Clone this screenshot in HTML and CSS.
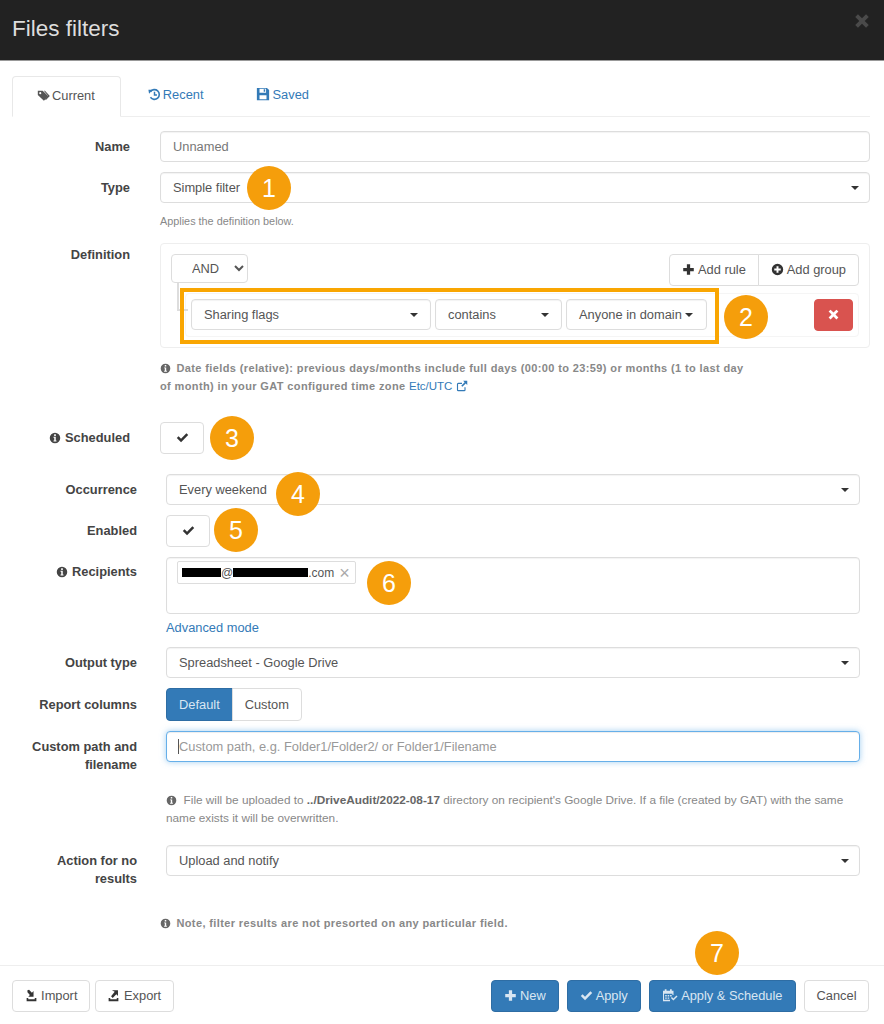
FILE: index.html
```html
<!DOCTYPE html>
<html lang="en">
<head>
    <meta charset="UTF-8">
    <meta name="viewport" content="width=device-width, initial-scale=1.0">
    <title>Files filters</title>
    <link rel="stylesheet" href="styles.css">
</head>
<body>
    <svg class="sprite" aria-hidden="true">
        <symbol id="i-info" viewBox="0 0 16 16"><path fill-rule="evenodd" d="M8 1a7 7 0 1 1 0 14A7 7 0 0 1 8 1zM6.900 3v2.200h2.200V3zM6 6.400v1.300h1v3.600H6v1.400h4v-1.400H9V6.400z"/></symbol>
        <symbol id="i-check" viewBox="0 0 16 16"><path d="M1 8.600 3.200 6.400l3 3 6.600-6.600L15 5l-8.800 8.800z"/></symbol>
        <symbol id="i-plus" viewBox="0 0 16 16"><path d="M6 1.500h4V6h4.500v4H10v4.500H6V10H1.500V6H6z"/></symbol>
        <symbol id="i-plus-circle" viewBox="0 0 16 16"><path fill-rule="evenodd" d="M8 1a7 7 0 1 1 0 14A7 7 0 0 1 8 1zM6.800 4v2.800H4v2.400h2.800V12h2.400V9.200H12V6.800H9.200V4z"/></symbol>
        <symbol id="i-times" viewBox="0 0 16 16"><path d="M4.400 2 8 5.600 11.600 2 14 4.400 10.400 8l3.600 3.600-2.400 2.400L8 10.400 4.400 14 2 11.600 5.600 8 2 4.400z"/></symbol>
        <symbol id="i-tag" viewBox="0 0 16 16"><path fill-rule="evenodd" d="M1 2h6l7 7-5.500 5.500L1 7.500zM4 3.800a1.300 1.300 0 1 0 0 2.600 1.300 1.300 0 0 0 0-2.600z"/><path d="M8.500 2h1.300l6 6.500-4.800 5-1-1 3.700-4z"/></symbol>
        <symbol id="i-history" viewBox="0 0 16 16"><path fill="none" stroke="currentColor" stroke-width="2" d="M3 4.500A6 6 0 1 1 3 11.500"/><path d="M0.500 2 5.800 2.300 1.300 7z"/><path fill="none" stroke="currentColor" stroke-width="1.800" d="M8 4.500V8.500h3"/></symbol>
        <symbol id="i-save" viewBox="0 0 16 16"><path fill-rule="evenodd" d="M1 1h11.500L15 3.500V15H1zM4 2v4.500h7.500V2zM4 9.500V14h8V9.500zM8.800 2.500h1.700v3H8.800z"/></symbol>
        <symbol id="i-link" viewBox="0 0 16 16"><path fill="none" stroke="currentColor" stroke-width="1.500" d="M12 9.500v3.700a1 1 0 0 1-1 1H3a1 1 0 0 1-1-1V5.500a1 1 0 0 1 1-1h5"/><path d="M9.500 1H15v5.500l-2-2-4.500 4.500-1.500-1.500L11.500 3z"/></symbol>
        <symbol id="i-calendar" viewBox="0 0 18 16"><path fill-rule="evenodd" d="M1 3h2V1.500h2V3h4V1.500h2V3h2v5h-1.200V6.500H2.200v7H9V15H1zM3.500 8h1.800v1.600H3.500zM6.300 8h1.800v1.600H6.300zM9.100 8h1.800v1.600H9.100zM3.500 10.800h1.800v1.600H3.500zM6.300 10.800h1.800v1.600H6.300z"/><path d="m10 11.500 1.200-1.200 1.700 1.700 3.500-3.500 1.200 1.200-4.700 4.700z"/></symbol>
        <symbol id="i-import" viewBox="0 0 16 16"><path d="M2 11h2v1.500h8V11h2v4H2z"/><path d="M3 1.500 5 1l3.500 3.500L10.500 2.500V9.500H4l2-2L3 4z"/></symbol>
        <symbol id="i-export" viewBox="0 0 16 16"><path d="M2 11h2v1.500h8V11h2v4H2z"/><path d="M6 1.500h7.500V8.500l-2-2L7 11 5 9l4.500-5.500z"/></symbol>
    </svg>

    <div class="modal">
        <header class="modal-header">
            <h1>Files filters</h1>
            <svg class="close-icon"><use href="#i-times"/></svg>
        </header>

        <main class="modal-body">
            <ul class="tabs">
                <li class="tab active"><svg class="icon"><use href="#i-tag"/></svg>Current</li>
                <li class="tab"><svg class="icon"><use href="#i-history"/></svg>Recent</li>
                <li class="tab tab-saved"><svg class="icon"><use href="#i-save"/></svg>Saved</li>
            </ul>

            <div class="form-row">
                <label class="row-label">Name</label>
                <input class="control name-input" type="text" value="Unnamed">
            </div>
            <div class="form-row">
                <label class="row-label">Type</label>
                <div class="control select">Simple filter<span class="caret"></span></div>
            </div>
            <p class="help applies">Applies the definition below.</p>

            <div class="form-row definition-row">
                <label class="row-label">Definition</label>
                <div class="definition">
                    <div class="group-head">
                        <select class="and-select"><option>AND</option></select>
                        <div class="btn-group">
                            <button class="btn"><svg class="icon dark"><use href="#i-plus"/></svg> Add rule</button>
                            <button class="btn"><svg class="icon dark"><use href="#i-plus-circle"/></svg> Add group</button>
                        </div>
                    </div>
                    <div class="rule">
                        <div class="control select rule-field">Sharing flags<span class="caret"></span></div>
                        <div class="control select rule-op">contains<span class="caret"></span></div>
                        <div class="control select rule-value">Anyone in domain<span class="caret"></span></div>
                        <button class="btn btn-danger"><svg class="icon"><use href="#i-times"/></svg></button>
                    </div>
                </div>
            </div>
            <p class="note date-note"><svg class="icon"><use href="#i-info"/></svg> Date fields (relative): previous days/months include full days (00:00 to 23:59) or months (1 to last day<br>of month) in your GAT configured time zone <a href="#">Etc/UTC <svg class="icon"><use href="#i-link"/></svg></a></p>

            <div class="form-row scheduled-row">
                <label class="row-label"><svg class="icon"><use href="#i-info"/></svg> Scheduled</label>
                <button class="btn check-btn"><svg class="icon dark"><use href="#i-check"/></svg></button>
            </div>

            <section class="schedule">
                <div class="form-row">
                    <label class="row-label">Occurrence</label>
                    <div class="control select">Every weekend<span class="caret"></span></div>
                </div>
                <div class="form-row">
                    <label class="row-label">Enabled</label>
                    <button class="btn check-btn"><svg class="icon dark"><use href="#i-check"/></svg></button>
                </div>
                <div class="form-row">
                    <label class="row-label recipients-label"><svg class="icon"><use href="#i-info"/></svg> Recipients</label>
                    <div class="control recipients">
                        <span class="chip"><span class="redact first"></span>@<span class="redact second"></span>.com<span class="chip-x">×</span></span>
                    </div>
                </div>
                <div class="form-row advanced">
                    <span class="row-label"></span>
                    <a href="#">Advanced mode</a>
                </div>
                <div class="form-row">
                    <label class="row-label">Output type</label>
                    <div class="control select">Spreadsheet - Google Drive<span class="caret"></span></div>
                </div>
                <div class="form-row">
                    <label class="row-label columns-label">Report columns</label>
                    <div class="btn-group columns">
                        <button class="btn btn-primary">Default</button>
                        <button class="btn">Custom</button>
                    </div>
                </div>
                <div class="form-row">
                    <label class="row-label two-line">Custom path and filename</label>
                    <div class="focus-wrap">
                        <input class="control focused" type="text" placeholder="Custom path, e.g. Folder1/Folder2/ or Folder1/Filename">
                    </div>
                </div>
                <div class="form-row upload-help">
                    <span class="row-label"></span>
                    <p class="help"><svg class="icon"><use href="#i-info"/></svg> &nbsp;File will be uploaded to <b>../DriveAudit/2022-08-17</b> directory on recipient's Google Drive. If a file (created by GAT) with the same<br>name exists it will be overwritten.</p>
                </div>
                <div class="form-row no-results">
                    <label class="row-label two-line">Action for no results</label>
                    <div class="control select">Upload and notify<span class="caret"></span></div>
                </div>
            </section>

            <p class="note presort-note"><svg class="icon"><use href="#i-info"/></svg> Note, filter results are not presorted on any particular field.</p>
        </main>

        <footer class="modal-footer">
            <div class="footer-left">
                <button class="btn"><svg class="icon dark"><use href="#i-import"/></svg> Import</button>
                <button class="btn"><svg class="icon dark"><use href="#i-export"/></svg> Export</button>
            </div>
            <div class="footer-right">
                <button class="btn btn-primary"><svg class="icon"><use href="#i-plus"/></svg> New</button>
                <button class="btn btn-primary"><svg class="icon"><use href="#i-check"/></svg> Apply</button>
                <button class="btn btn-primary schedule-btn"><svg class="icon wide"><use href="#i-calendar"/></svg> Apply &amp; Schedule</button>
                <button class="btn cancel-btn">Cancel</button>
            </div>
        </footer>

        <!-- annotations drawn over the dialog -->
        <div class="highlight"></div>
        <span class="badge b1">1</span>
        <span class="badge b2">2</span>
        <span class="badge b3">3</span>
        <span class="badge b4">4</span>
        <span class="badge b5">5</span>
        <span class="badge b6">6</span>
        <span class="badge b7">7</span>
    </div>
</body>
</html>
```

FILE: styles.css
```css
* {
    margin: 0;
    padding: 0;
    box-sizing: border-box;
}

html, body {
    height: 100%;
    overflow: hidden;
}

body {
    font-family: "Liberation Sans", Arial, sans-serif;
    font-size: 12.85px;
    line-height: 18px;
    color: #555;
    background: #fff;
}

a {
    color: #337ab7;
    text-decoration: none;
}

.sprite {
    display: none;
}

.icon {
    width: 13px;
    height: 13px;
    fill: currentColor;
    vertical-align: -2px;
}

.icon.dark {
    color: #333;
}

.icon.wide {
    width: 16px;
    height: 14px;
}

.modal {
    position: relative;
    height: 1024px;
    display: flex;
    flex-direction: column;
}

.modal-header {
    height: 61px;
    flex: none;
    background: #222;
    border-bottom: 1px solid #999;
    padding: 0 12px;
    display: flex;
    justify-content: space-between;
}

.modal-header h1 {
    font-size: 22.500px;
    font-weight: normal;
    line-height: 58px;
    color: #ddd;
}

.close-icon {
    width: 18px;
    height: 18px;
    fill: #4a4a4a;
    margin: 12px 1px 0 0;
}

.modal-body {
    flex: 1;
    padding: 15px 14px 0 12px;
}

/* tabs */
.tabs {
    display: flex;
    list-style: none;
    height: 41px;
    border-bottom: 1px solid #eee;
    margin-bottom: 14px;
}

.tab {
    padding: 10px 25px;
    margin-right: 2px;
    height: 41px;
    color: #337ab7;
}

.tab .icon {
    margin-right: 2px;
}

.tab-saved .icon {
    width: 14px;
    height: 14px;
    margin-right: 3px;
}

.tab.active {
    color: #555;
    background: #fff;
    border: 1px solid #e8e8e8;
    border-bottom-color: #fff;
    border-radius: 4px 4px 0 0;
    padding: 10px 25px 10px 24px;
}

/* form rows */
.form-row {
    display: flex;
    align-items: flex-start;
    margin-bottom: 10px;
}

.row-label {
    width: 118px;
    flex: none;
    margin-right: 30px;
    padding-top: 7px;
    text-align: right;
    font-weight: bold;
    color: #444;
}

.row-label .icon {
    width: 12px;
    height: 12px;
}

.control {
    flex: 1;
    min-width: 0;
    width: 100%;
    height: 31px;
    padding: 5px 12px;
    font: inherit;
    color: #555;
    background: #fff;
    border: 1px solid #ddd;
    border-radius: 4px;
    box-shadow: inset 0 1px 1px rgba(0, 0, 0, 0.05);
}

.name-input {
    color: #777;
}

.select {
    position: relative;
    line-height: 19px;
}

.caret {
    position: absolute;
    right: 10px;
    top: 13px;
    border-top: 4px solid #333;
    border-left: 4px solid transparent;
    border-right: 4px solid transparent;
}

.help {
    font-size: 11.800px;
    line-height: 18px;
    color: #888;
}

.help .icon {
    width: 11px;
    height: 11px;
    color: #666;
}

.help b {
    color: #666;
}

.applies {
    font-size: 10.850px;
    margin: -1px 0 13px 148px;
}

/* definition box */
.definition {
    flex: 1;
    min-width: 0;
    height: 105px;
    padding: 10px;
    border: 1px solid #eee;
    border-radius: 4px;
}

.definition-row {
    margin-bottom: 0;
}

.definition-row .row-label {
    padding-top: 3px;
}

.group-head {
    display: flex;
    justify-content: space-between;
    align-items: flex-start;
}

.and-select {
    width: 77px;
    height: 29px;
    padding-left: 16px;
    font: inherit;
    color: #555;
    background: #fff;
    border: 1px solid #ddd;
    border-radius: 4px;
}

.btn {
    height: 32px;
    padding: 0 12px;
    font: inherit;
    color: #555;
    background: #fff;
    border: 1px solid #ddd;
    border-radius: 4px;
}

.btn-primary {
    color: #d9e6f2;
    background: #337ab7;
    border-color: #2e6da4;
}

.btn-danger {
    width: 39px;
    padding: 0;
    margin-left: auto;
    color: #fff;
    background: #d9534f;
    border-color: #d9534f;
}

.btn-group {
    display: flex;
}

.btn-group .btn:first-child {
    border-radius: 4px 0 0 4px;
}

.btn-group .btn:last-child {
    margin-left: -1px;
    border-radius: 0 4px 4px 0;
}

.rule {
    position: relative;
    display: flex;
    gap: 4px;
    height: 44px;
    margin: 7px 0 0 14px;
    padding: 5px;
    border: 1px solid #f5f5f5;
    border-radius: 4px;
}

.rule::before {
    content: "";
    position: absolute;
    left: -9px;
    top: -11px;
    width: 9px;
    height: 26px;
    border-left: 2px solid #ddd;
    border-bottom: 2px solid #ddd;
}

.rule-field {
    flex: none;
    width: 240px;
}

.rule-field .caret,
.rule-op .caret {
    right: 12px;
}

.rule-op {
    flex: none;
    width: 127px;
}

.rule-value {
    flex: none;
    width: 141px;
}

.rule-value .caret {
    right: 13px;
}

.note {
    font-size: 11px;
    font-weight: bold;
    line-height: 18px;
    letter-spacing: 0.38px;
    color: #888;
}

.note a {
    font-size: 11.500px;
    font-weight: normal;
    letter-spacing: 0;
}

.note .icon {
    width: 11px;
    height: 11px;
    color: #666;
    margin-right: 2px;
}

.note a .icon {
    width: 12px;
    height: 12px;
    color: #337ab7;
    margin: 0;
}

.date-note {
    margin: 11px 0 27px 148px;
}

.scheduled-row {
    margin-bottom: 20px;
}

.check-btn {
    width: 44px;
    flex: none;
}

.schedule {
    padding-right: 10px;
}

.schedule .row-label {
    width: 125px;
    margin-right: 29px;
}

.schedule .recipients-label {
    padding-top: 6px;
}

.schedule .columns-label {
    padding-top: 8px;
}

.recipients {
    height: 57px;
    padding: 3px 10px;
}

.chip {
    display: inline-flex;
    align-items: center;
    height: 23px;
    padding: 0 5px 0 4px;
    font-size: 12px;
    border: 1px solid #ddd;
    border-radius: 2px;
}

.redact {
    display: inline-block;
    height: 9px;
    background: #000;
}

.redact.first {
    width: 39px;
}

.redact.second {
    width: 75px;
}

.chip-x {
    margin-left: 5px;
    font-size: 18px;
    color: #aaa;
}

.advanced {
    margin-top: -5px;
    margin-bottom: 10px;
}

.schedule .advanced .row-label {
    padding: 0;
}

.columns .btn {
    height: 33px;
}

.focus-wrap {
    position: relative;
    flex: 1;
}

.focus-wrap::before {
    content: "";
    position: absolute;
    left: 12px;
    top: 8px;
    width: 1px;
    height: 15px;
    background: #555;
}

.focused {
    display: block;
    border-color: #66afe9;
    box-shadow: inset 0 1px 1px rgba(0, 0, 0, 0.075), 0 0 6px rgba(102, 175, 233, 0.6);
}

.focused::placeholder {
    color: #999;
}

.upload-help {
    margin-top: 17px;
    margin-bottom: 18px;
}

.schedule .upload-help .row-label {
    padding: 0;
}

.no-results {
    margin-bottom: 0;
}

.presort-note {
    margin: 26px 0 0 148px;
}

/* footer */
.modal-footer {
    height: 59px;
    flex: none;
    display: flex;
    justify-content: space-between;
    padding: 14px 15px 0 12px;
    border-top: 1px solid #eee;
}

.footer-left {
    display: flex;
    gap: 5px;
}

.footer-left .btn {
    padding: 0 11.500px;
}

.footer-right {
    display: flex;
    gap: 8px;
}

.schedule-btn {
    padding: 0 12.500px;
}

.cancel-btn {
    padding: 0 11.500px;
}

/* annotations */
.highlight {
    position: absolute;
    left: 180px;
    top: 288px;
    width: 539px;
    height: 56px;
    border: 4px solid #f9a602;
}

.badge {
    position: absolute;
    width: 44px;
    height: 44px;
    border-radius: 50%;
    background: #f59e0b;
    color: #fff;
    font-size: 25px;
    line-height: 44px;
    text-align: center;
}

.b1 { left: 247px; top: 166px; }
.b2 { left: 724px; top: 295px; }
.b3 { left: 210px; top: 416px; }
.b4 { left: 276px; top: 472px; }
.b5 { left: 214px; top: 508px; }
.b6 { left: 367px; top: 561px; }
.b7 { left: 695px; top: 931px; }
```
